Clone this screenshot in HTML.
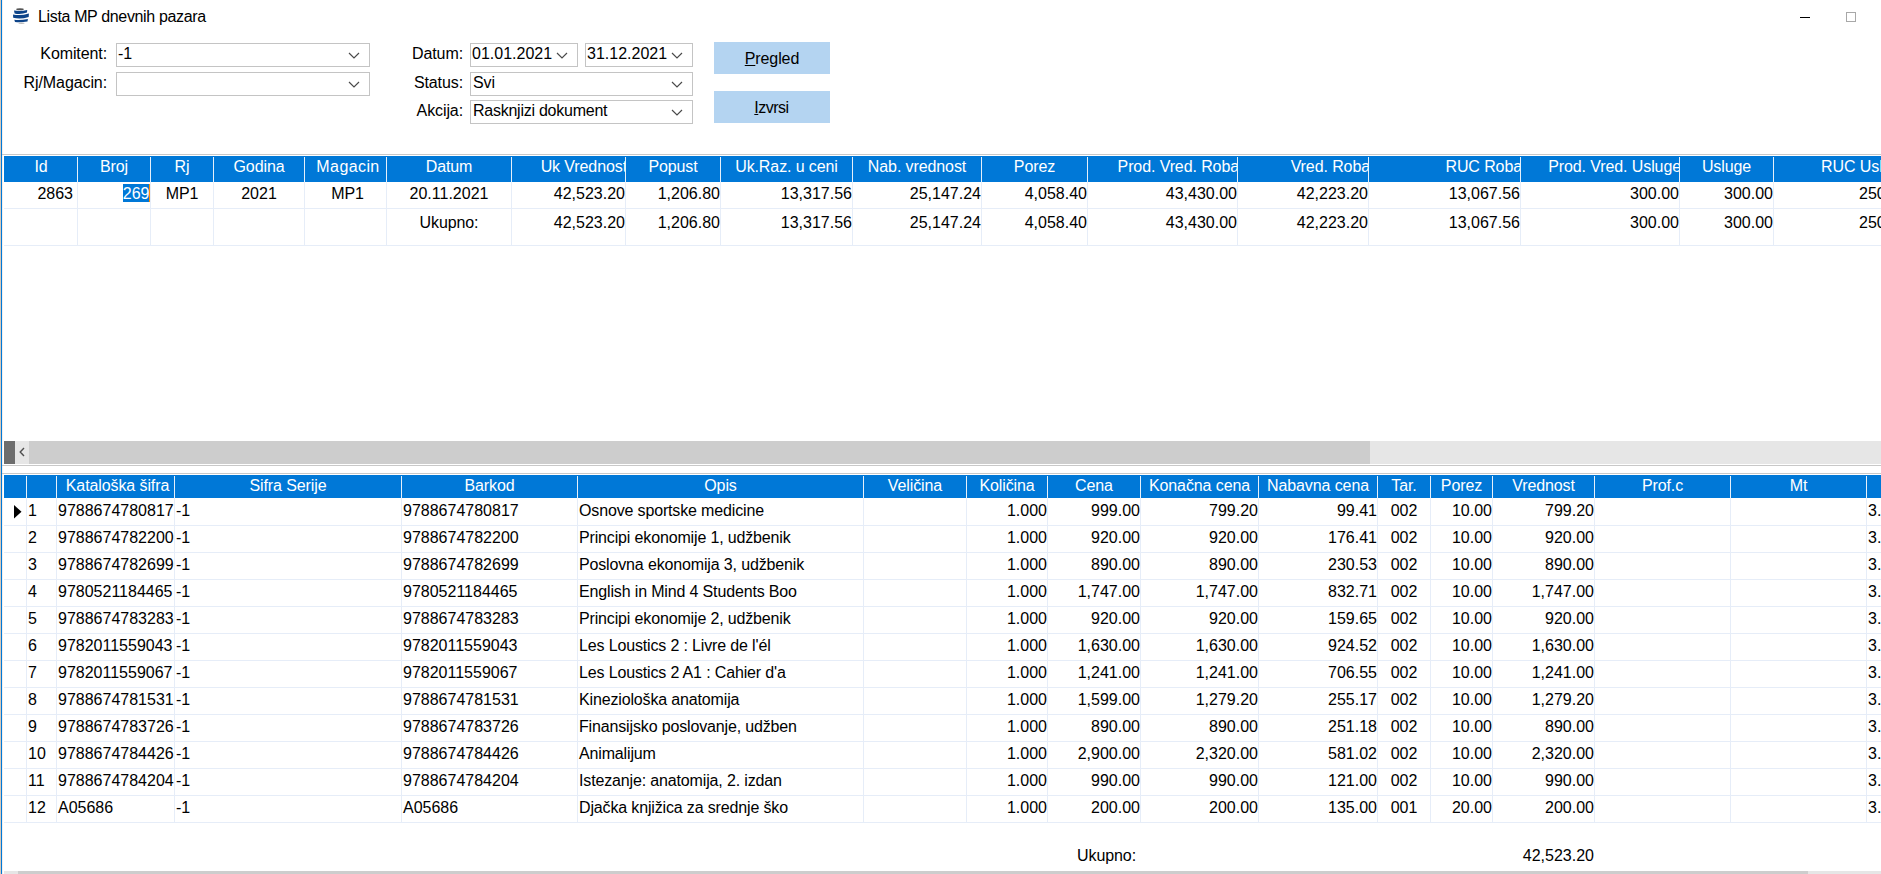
<!DOCTYPE html>
<html><head><meta charset="utf-8"><title>Lista MP dnevnih pazara</title>
<style>
html,body{margin:0;padding:0;background:#fff;width:1881px;height:874px;overflow:hidden;position:relative}
.t{position:absolute;white-space:nowrap;line-height:20px;font-family:"Liberation Sans", sans-serif}
.r{position:absolute}
.clip{position:absolute;overflow:hidden}
</style></head><body>
<div class="r" style="left:0px;top:0px;width:1px;height:874px;background:#d6c9bc;"></div>
<div class="r" style="left:1px;top:0px;width:1px;height:874px;background:#0078d7;"></div>
<div class="r" style="left:2px;top:0px;width:1px;height:874px;background:#f4eeea;"></div>
<svg class="r" style="left:10px;top:5px" width="22" height="22" viewBox="0 0 22 22">
<ellipse cx="10" cy="4.2" rx="3.8" ry="1.0" fill="#555"/>
<path d="M4 5.6 Q10.5 6.6 17.2 5.0 L17.0 7.6 Q10.5 9.8 4.6 8.4 Z" fill="#0d4489"/>
<path d="M3 9.4 Q10.5 11.2 18.9 8.4 L18.7 11.9 Q10.5 14.8 3.2 12.8 Z" fill="#0d4489"/>
<path d="M4.3 14.8 Q10.5 15.6 17.9 13.9 L17.5 16.5 Q10.5 17.8 5 17.0 Z" fill="#0d4489"/>
<ellipse cx="11.5" cy="18.2" rx="3.2" ry="0.7" fill="#bbb"/>
</svg>
<div class="t" style="left:38px;top:7.46px;font-size:16px;color:#000;letter-spacing:-0.35px;">Lista MP dnevnih pazara</div>
<div class="r" style="left:1800px;top:17px;width:10px;height:1px;background:#000;"></div>
<div class="r" style="left:1846px;top:12px;width:10px;height:10px;box-sizing:border-box;border:1px solid #a8a8a8;background:transparent"></div>
<div class="t" style="right:1774px;top:44.46px;font-size:16px;color:#000;letter-spacing:-0.1px;text-align:right;">Komitent:</div>
<div class="t" style="right:1774px;top:73.46px;font-size:16px;color:#000;letter-spacing:-0.1px;text-align:right;">Rj/Magacin:</div>
<div class="r" style="left:116px;top:43px;width:254px;height:24px;box-sizing:border-box;border:1px solid #c4c4c4;background:#fff"></div>
<div class="t" style="left:118px;top:44.46px;font-size:16px;color:#000;">-1</div>
<svg class="r" style="left:348.0px;top:52.0px" width="12" height="7"><polyline points="1,1 6.0,6 11,1" fill="none" stroke="#4a4a4a" stroke-width="1.2"/></svg>
<div class="r" style="left:116px;top:72px;width:254px;height:24px;box-sizing:border-box;border:1px solid #c4c4c4;background:#fff"></div>
<svg class="r" style="left:348.0px;top:81.0px" width="12" height="7"><polyline points="1,1 6.0,6 11,1" fill="none" stroke="#4a4a4a" stroke-width="1.2"/></svg>
<div class="t" style="right:1418px;top:44.46px;font-size:16px;color:#000;letter-spacing:-0.1px;text-align:right;">Datum:</div>
<div class="t" style="right:1418px;top:73.46px;font-size:16px;color:#000;letter-spacing:-0.1px;text-align:right;">Status:</div>
<div class="t" style="right:1418px;top:101.46px;font-size:16px;color:#000;letter-spacing:-0.1px;text-align:right;">Akcija:</div>
<div class="r" style="left:470px;top:43px;width:108px;height:24px;box-sizing:border-box;border:1px solid #c4c4c4;background:#fff"></div>
<div class="t" style="left:472px;top:44.46px;font-size:16px;color:#000;">01.01.2021</div>
<svg class="r" style="left:556.0px;top:52.0px" width="12" height="7"><polyline points="1,1 6.0,6 11,1" fill="none" stroke="#4a4a4a" stroke-width="1.2"/></svg>
<div class="r" style="left:585px;top:43px;width:108px;height:24px;box-sizing:border-box;border:1px solid #c4c4c4;background:#fff"></div>
<div class="t" style="left:587px;top:44.46px;font-size:16px;color:#000;">31.12.2021</div>
<svg class="r" style="left:671.0px;top:52.0px" width="12" height="7"><polyline points="1,1 6.0,6 11,1" fill="none" stroke="#4a4a4a" stroke-width="1.2"/></svg>
<div class="r" style="left:470px;top:72px;width:223px;height:24px;box-sizing:border-box;border:1px solid #c4c4c4;background:#fff"></div>
<div class="t" style="left:473px;top:73.46px;font-size:16px;color:#000;letter-spacing:-0.1px;">Svi</div>
<svg class="r" style="left:671.0px;top:81.0px" width="12" height="7"><polyline points="1,1 6.0,6 11,1" fill="none" stroke="#4a4a4a" stroke-width="1.2"/></svg>
<div class="r" style="left:470px;top:100px;width:223px;height:24px;box-sizing:border-box;border:1px solid #c4c4c4;background:#fff"></div>
<div class="t" style="left:473px;top:101.46px;font-size:16px;color:#000;letter-spacing:-0.25px;">Rasknjizi dokument</div>
<svg class="r" style="left:671.0px;top:109.0px" width="12" height="7"><polyline points="1,1 6.0,6 11,1" fill="none" stroke="#4a4a4a" stroke-width="1.2"/></svg>
<div class="r" style="left:714px;top:42px;width:116px;height:32px;background:#b4d4f1;"></div>
<div class="t" style="left:472px;width:600px;top:49.46px;font-size:16px;color:#000;letter-spacing:-0.1px;text-align:center;"><u>P</u>regled</div>
<div class="r" style="left:714px;top:91px;width:116px;height:32px;background:#b4d4f1;"></div>
<div class="t" style="left:471.5px;width:600px;top:98.46px;font-size:16px;color:#000;letter-spacing:-0.5px;text-align:center;"><u>I</u>zvrsi</div>
<div class="r" style="left:2px;top:154px;width:1879px;height:1px;background:#c8c8c8;"></div>
<div class="r" style="left:4px;top:156px;width:1877px;height:26px;background:#0078d7;"></div>
<div class="r" style="left:4px;top:208px;width:1877px;height:1px;background:#e6edf8;"></div>
<div class="r" style="left:4px;top:245px;width:1877px;height:1px;background:#e6edf8;"></div>
<div class="t" style="left:-259.0px;width:600px;top:157.46px;font-size:16px;color:#fff;letter-spacing:-0.1px;text-align:center;">Id</div>
<div class="t" style="left:-186.0px;width:600px;top:157.46px;font-size:16px;color:#fff;letter-spacing:-0.1px;text-align:center;">Broj</div>
<div class="t" style="left:-118.0px;width:600px;top:157.46px;font-size:16px;color:#fff;letter-spacing:-0.1px;text-align:center;">Rj</div>
<div class="t" style="left:-41.0px;width:600px;top:157.46px;font-size:16px;color:#fff;letter-spacing:-0.1px;text-align:center;">Godina</div>
<div class="t" style="left:48.0px;width:600px;top:157.46px;font-size:16px;color:#fff;letter-spacing:0.4px;text-align:center;">Magacin</div>
<div class="t" style="left:149.0px;width:600px;top:157.46px;font-size:16px;color:#fff;letter-spacing:-0.1px;text-align:center;">Datum</div>
<div class="clip" style="left:512px;top:156px;width:114px;height:26px"><div class="t" style="right:-1px;top:1.46px;font-size:16px;color:#fff;letter-spacing:-0.1px">Uk Vrednost</div></div>
<div class="t" style="left:373.0px;width:600px;top:157.46px;font-size:16px;color:#fff;letter-spacing:-0.1px;text-align:center;">Popust</div>
<div class="t" style="left:486.5px;width:600px;top:157.46px;font-size:16px;color:#fff;letter-spacing:-0.1px;text-align:center;">Uk.Raz. u ceni</div>
<div class="t" style="left:617.0px;width:600px;top:157.46px;font-size:16px;color:#fff;letter-spacing:-0.1px;text-align:center;">Nab. vrednost</div>
<div class="t" style="left:734.5px;width:600px;top:157.46px;font-size:16px;color:#fff;letter-spacing:-0.1px;text-align:center;">Porez</div>
<div class="clip" style="left:1088px;top:156px;width:150px;height:26px"><div class="t" style="right:-1px;top:1.46px;font-size:16px;color:#fff;letter-spacing:-0.1px">Prod. Vred. Roba</div></div>
<div class="clip" style="left:1238px;top:156px;width:131px;height:26px"><div class="t" style="right:-1px;top:1.46px;font-size:16px;color:#fff;letter-spacing:-0.1px">Vred. Roba</div></div>
<div class="clip" style="left:1369px;top:156px;width:152px;height:26px"><div class="t" style="right:-1px;top:1.46px;font-size:16px;color:#fff;letter-spacing:-0.1px">RUC Roba</div></div>
<div class="clip" style="left:1521px;top:156px;width:159px;height:26px"><div class="t" style="right:-1px;top:1.46px;font-size:16px;color:#fff;letter-spacing:-0.1px">Prod. Vred. Usluge</div></div>
<div class="t" style="left:1426.5px;width:600px;top:157.46px;font-size:16px;color:#fff;letter-spacing:-0.1px;text-align:center;">Usluge</div>
<div class="clip" style="left:1774px;top:156px;width:137px;height:26px"><div class="t" style="right:2px;top:1.46px;font-size:16px;color:#fff;letter-spacing:-0.1px">RUC Usluge</div></div>
<div class="t" style="right:1808px;top:184.46px;font-size:16px;color:#000;text-align:right;">2863</div>
<div class="r" style="left:123px;top:184px;width:27px;height:18px;background:#0078d7;"></div>
<div class="t" style="right:1731.5px;top:184.46px;font-size:16px;color:#fff;text-align:right;">269</div>
<div class="r" style="left:149px;top:184px;width:1px;height:18px;background:#ff8c00;"></div>
<div class="t" style="left:-118.0px;width:600px;top:184.46px;font-size:16px;color:#000;letter-spacing:-0.1px;text-align:center;">MP1</div>
<div class="t" style="left:-41.0px;width:600px;top:184.46px;font-size:16px;color:#000;text-align:center;">2021</div>
<div class="t" style="left:47.5px;width:600px;top:184.46px;font-size:16px;color:#000;letter-spacing:-0.1px;text-align:center;">MP1</div>
<div class="t" style="left:149.0px;width:600px;top:184.46px;font-size:16px;color:#000;text-align:center;">20.11.2021</div>
<div class="t" style="left:149.0px;width:600px;top:213.46px;font-size:16px;color:#000;letter-spacing:-0.1px;text-align:center;">Ukupno:</div>
<div class="t" style="right:1256px;top:184.46px;font-size:16px;color:#000;text-align:right;">42,523.20</div>
<div class="t" style="right:1256px;top:213.46px;font-size:16px;color:#000;text-align:right;">42,523.20</div>
<div class="t" style="right:1161px;top:184.46px;font-size:16px;color:#000;text-align:right;">1,206.80</div>
<div class="t" style="right:1161px;top:213.46px;font-size:16px;color:#000;text-align:right;">1,206.80</div>
<div class="t" style="right:1029px;top:184.46px;font-size:16px;color:#000;text-align:right;">13,317.56</div>
<div class="t" style="right:1029px;top:213.46px;font-size:16px;color:#000;text-align:right;">13,317.56</div>
<div class="t" style="right:900px;top:184.46px;font-size:16px;color:#000;text-align:right;">25,147.24</div>
<div class="t" style="right:900px;top:213.46px;font-size:16px;color:#000;text-align:right;">25,147.24</div>
<div class="t" style="right:794px;top:184.46px;font-size:16px;color:#000;text-align:right;">4,058.40</div>
<div class="t" style="right:794px;top:213.46px;font-size:16px;color:#000;text-align:right;">4,058.40</div>
<div class="t" style="right:644px;top:184.46px;font-size:16px;color:#000;text-align:right;">43,430.00</div>
<div class="t" style="right:644px;top:213.46px;font-size:16px;color:#000;text-align:right;">43,430.00</div>
<div class="t" style="right:513px;top:184.46px;font-size:16px;color:#000;text-align:right;">42,223.20</div>
<div class="t" style="right:513px;top:213.46px;font-size:16px;color:#000;text-align:right;">42,223.20</div>
<div class="t" style="right:361px;top:184.46px;font-size:16px;color:#000;text-align:right;">13,067.56</div>
<div class="t" style="right:361px;top:213.46px;font-size:16px;color:#000;text-align:right;">13,067.56</div>
<div class="t" style="right:202px;top:184.46px;font-size:16px;color:#000;text-align:right;">300.00</div>
<div class="t" style="right:202px;top:213.46px;font-size:16px;color:#000;text-align:right;">300.00</div>
<div class="t" style="right:108px;top:184.46px;font-size:16px;color:#000;text-align:right;">300.00</div>
<div class="t" style="right:108px;top:213.46px;font-size:16px;color:#000;text-align:right;">300.00</div>
<div class="t" style="right:-27px;top:184.46px;font-size:16px;color:#000;text-align:right;">250.00</div>
<div class="t" style="right:-27px;top:213.46px;font-size:16px;color:#000;text-align:right;">250.00</div>
<div class="r" style="left:77px;top:157px;width:1px;height:25px;background:#e6f0fa;"></div>
<div class="r" style="left:77px;top:182px;width:1px;height:63px;background:#e6edf8;"></div>
<div class="r" style="left:150px;top:157px;width:1px;height:25px;background:#e6f0fa;"></div>
<div class="r" style="left:150px;top:182px;width:1px;height:63px;background:#e6edf8;"></div>
<div class="r" style="left:213px;top:157px;width:1px;height:25px;background:#e6f0fa;"></div>
<div class="r" style="left:213px;top:182px;width:1px;height:63px;background:#e6edf8;"></div>
<div class="r" style="left:304px;top:157px;width:1px;height:25px;background:#e6f0fa;"></div>
<div class="r" style="left:304px;top:182px;width:1px;height:63px;background:#e6edf8;"></div>
<div class="r" style="left:386px;top:157px;width:1px;height:25px;background:#e6f0fa;"></div>
<div class="r" style="left:386px;top:182px;width:1px;height:63px;background:#e6edf8;"></div>
<div class="r" style="left:511px;top:157px;width:1px;height:25px;background:#e6f0fa;"></div>
<div class="r" style="left:511px;top:182px;width:1px;height:63px;background:#e6edf8;"></div>
<div class="r" style="left:625px;top:157px;width:1px;height:25px;background:#e6f0fa;"></div>
<div class="r" style="left:625px;top:182px;width:1px;height:63px;background:#e6edf8;"></div>
<div class="r" style="left:720px;top:157px;width:1px;height:25px;background:#e6f0fa;"></div>
<div class="r" style="left:720px;top:182px;width:1px;height:63px;background:#e6edf8;"></div>
<div class="r" style="left:852px;top:157px;width:1px;height:25px;background:#e6f0fa;"></div>
<div class="r" style="left:852px;top:182px;width:1px;height:63px;background:#e6edf8;"></div>
<div class="r" style="left:981px;top:157px;width:1px;height:25px;background:#e6f0fa;"></div>
<div class="r" style="left:981px;top:182px;width:1px;height:63px;background:#e6edf8;"></div>
<div class="r" style="left:1087px;top:157px;width:1px;height:25px;background:#e6f0fa;"></div>
<div class="r" style="left:1087px;top:182px;width:1px;height:63px;background:#e6edf8;"></div>
<div class="r" style="left:1237px;top:157px;width:1px;height:25px;background:#e6f0fa;"></div>
<div class="r" style="left:1237px;top:182px;width:1px;height:63px;background:#e6edf8;"></div>
<div class="r" style="left:1368px;top:157px;width:1px;height:25px;background:#e6f0fa;"></div>
<div class="r" style="left:1368px;top:182px;width:1px;height:63px;background:#e6edf8;"></div>
<div class="r" style="left:1520px;top:157px;width:1px;height:25px;background:#e6f0fa;"></div>
<div class="r" style="left:1520px;top:182px;width:1px;height:63px;background:#e6edf8;"></div>
<div class="r" style="left:1679px;top:157px;width:1px;height:25px;background:#e6f0fa;"></div>
<div class="r" style="left:1679px;top:182px;width:1px;height:63px;background:#e6edf8;"></div>
<div class="r" style="left:1773px;top:157px;width:1px;height:25px;background:#e6f0fa;"></div>
<div class="r" style="left:1773px;top:182px;width:1px;height:63px;background:#e6edf8;"></div>
<div class="r" style="left:4px;top:441px;width:1877px;height:23px;background:#e6e6e6;"></div>
<div class="r" style="left:4px;top:441px;width:11px;height:23px;background:#6d6d6d;"></div>
<div class="r" style="left:29px;top:441px;width:1341px;height:23px;background:#cdcdcd;"></div>
<svg class="r" style="left:18px;top:446px" width="9" height="13"><polyline points="6,2 2.2,6 6,10" fill="none" stroke="#505050" stroke-width="1.4"/></svg>
<div class="r" style="left:2px;top:465px;width:1879px;height:1px;background:#c8c8c8;"></div>
<div class="r" style="left:2px;top:473px;width:1879px;height:1px;background:#c8c8c8;"></div>
<div class="r" style="left:4px;top:475px;width:1877px;height:23px;background:#0078d7;"></div>
<div class="r" style="left:26px;top:476px;width:1px;height:22px;background:#e6f0fa;"></div>
<div class="r" style="left:26px;top:498px;width:1px;height:324px;background:#e6edf8;"></div>
<div class="r" style="left:56px;top:476px;width:1px;height:22px;background:#e6f0fa;"></div>
<div class="r" style="left:56px;top:498px;width:1px;height:324px;background:#e6edf8;"></div>
<div class="r" style="left:174px;top:476px;width:1px;height:22px;background:#e6f0fa;"></div>
<div class="r" style="left:174px;top:498px;width:1px;height:324px;background:#e6edf8;"></div>
<div class="r" style="left:401px;top:476px;width:1px;height:22px;background:#e6f0fa;"></div>
<div class="r" style="left:401px;top:498px;width:1px;height:324px;background:#e6edf8;"></div>
<div class="r" style="left:577px;top:476px;width:1px;height:22px;background:#e6f0fa;"></div>
<div class="r" style="left:577px;top:498px;width:1px;height:324px;background:#e6edf8;"></div>
<div class="r" style="left:863px;top:476px;width:1px;height:22px;background:#e6f0fa;"></div>
<div class="r" style="left:863px;top:498px;width:1px;height:324px;background:#e6edf8;"></div>
<div class="r" style="left:966px;top:476px;width:1px;height:22px;background:#e6f0fa;"></div>
<div class="r" style="left:966px;top:498px;width:1px;height:324px;background:#e6edf8;"></div>
<div class="r" style="left:1047px;top:476px;width:1px;height:22px;background:#e6f0fa;"></div>
<div class="r" style="left:1047px;top:498px;width:1px;height:324px;background:#e6edf8;"></div>
<div class="r" style="left:1140px;top:476px;width:1px;height:22px;background:#e6f0fa;"></div>
<div class="r" style="left:1140px;top:498px;width:1px;height:324px;background:#e6edf8;"></div>
<div class="r" style="left:1258px;top:476px;width:1px;height:22px;background:#e6f0fa;"></div>
<div class="r" style="left:1258px;top:498px;width:1px;height:324px;background:#e6edf8;"></div>
<div class="r" style="left:1377px;top:476px;width:1px;height:22px;background:#e6f0fa;"></div>
<div class="r" style="left:1377px;top:498px;width:1px;height:324px;background:#e6edf8;"></div>
<div class="r" style="left:1430px;top:476px;width:1px;height:22px;background:#e6f0fa;"></div>
<div class="r" style="left:1430px;top:498px;width:1px;height:324px;background:#e6edf8;"></div>
<div class="r" style="left:1492px;top:476px;width:1px;height:22px;background:#e6f0fa;"></div>
<div class="r" style="left:1492px;top:498px;width:1px;height:324px;background:#e6edf8;"></div>
<div class="r" style="left:1594px;top:476px;width:1px;height:22px;background:#e6f0fa;"></div>
<div class="r" style="left:1594px;top:498px;width:1px;height:324px;background:#e6edf8;"></div>
<div class="r" style="left:1730px;top:476px;width:1px;height:22px;background:#e6f0fa;"></div>
<div class="r" style="left:1730px;top:498px;width:1px;height:324px;background:#e6edf8;"></div>
<div class="r" style="left:1866px;top:476px;width:1px;height:22px;background:#e6f0fa;"></div>
<div class="r" style="left:1866px;top:498px;width:1px;height:324px;background:#e6edf8;"></div>
<div class="r" style="left:4px;top:525px;width:1877px;height:1px;background:#e6edf8;"></div>
<div class="r" style="left:4px;top:552px;width:1877px;height:1px;background:#e6edf8;"></div>
<div class="r" style="left:4px;top:579px;width:1877px;height:1px;background:#e6edf8;"></div>
<div class="r" style="left:4px;top:606px;width:1877px;height:1px;background:#e6edf8;"></div>
<div class="r" style="left:4px;top:633px;width:1877px;height:1px;background:#e6edf8;"></div>
<div class="r" style="left:4px;top:660px;width:1877px;height:1px;background:#e6edf8;"></div>
<div class="r" style="left:4px;top:687px;width:1877px;height:1px;background:#e6edf8;"></div>
<div class="r" style="left:4px;top:714px;width:1877px;height:1px;background:#e6edf8;"></div>
<div class="r" style="left:4px;top:741px;width:1877px;height:1px;background:#e6edf8;"></div>
<div class="r" style="left:4px;top:768px;width:1877px;height:1px;background:#e6edf8;"></div>
<div class="r" style="left:4px;top:795px;width:1877px;height:1px;background:#e6edf8;"></div>
<div class="r" style="left:4px;top:822px;width:1877px;height:1px;background:#e6edf8;"></div>
<div class="t" style="left:-182.5px;width:600px;top:476.46px;font-size:16px;color:#fff;letter-spacing:-0.1px;text-align:center;">Kataloška šifra</div>
<div class="t" style="left:-12.0px;width:600px;top:476.46px;font-size:16px;color:#fff;letter-spacing:-0.1px;text-align:center;">Sifra Serije</div>
<div class="t" style="left:189.5px;width:600px;top:476.46px;font-size:16px;color:#fff;letter-spacing:-0.1px;text-align:center;">Barkod</div>
<div class="t" style="left:420.5px;width:600px;top:476.46px;font-size:16px;color:#fff;letter-spacing:-0.1px;text-align:center;">Opis</div>
<div class="t" style="left:615.0px;width:600px;top:476.46px;font-size:16px;color:#fff;letter-spacing:-0.1px;text-align:center;">Veličina</div>
<div class="t" style="left:707.0px;width:600px;top:476.46px;font-size:16px;color:#fff;letter-spacing:-0.1px;text-align:center;">Količina</div>
<div class="t" style="left:794.0px;width:600px;top:476.46px;font-size:16px;color:#fff;letter-spacing:-0.1px;text-align:center;">Cena</div>
<div class="t" style="left:899.5px;width:600px;top:476.46px;font-size:16px;color:#fff;letter-spacing:-0.1px;text-align:center;">Konačna cena</div>
<div class="t" style="left:1018.0px;width:600px;top:476.46px;font-size:16px;color:#fff;letter-spacing:-0.1px;text-align:center;">Nabavna cena</div>
<div class="t" style="left:1104.0px;width:600px;top:476.46px;font-size:16px;color:#fff;letter-spacing:-0.1px;text-align:center;">Tar.</div>
<div class="t" style="left:1161.5px;width:600px;top:476.46px;font-size:16px;color:#fff;letter-spacing:-0.1px;text-align:center;">Porez</div>
<div class="t" style="left:1243.5px;width:600px;top:476.46px;font-size:16px;color:#fff;letter-spacing:-0.1px;text-align:center;">Vrednost</div>
<div class="t" style="left:1362.5px;width:600px;top:476.46px;font-size:16px;color:#fff;letter-spacing:-0.1px;text-align:center;">Prof.c</div>
<div class="t" style="left:1498.5px;width:600px;top:476.46px;font-size:16px;color:#fff;letter-spacing:-0.1px;text-align:center;">Mt</div>
<div class="t" style="left:28px;top:501.46px;font-size:16px;color:#000;">1</div>
<div class="t" style="left:58px;top:501.46px;font-size:16px;color:#000;">9788674780817</div>
<div class="t" style="left:176px;top:501.46px;font-size:16px;color:#000;">-1</div>
<div class="t" style="left:403px;top:501.46px;font-size:16px;color:#000;">9788674780817</div>
<div class="t" style="left:579px;top:501.46px;font-size:16px;color:#000;letter-spacing:-0.15px;">Osnove sportske medicine</div>
<div class="t" style="right:834px;top:501.46px;font-size:16px;color:#000;text-align:right;">1.000</div>
<div class="t" style="right:741px;top:501.46px;font-size:16px;color:#000;text-align:right;">999.00</div>
<div class="t" style="right:623px;top:501.46px;font-size:16px;color:#000;text-align:right;">799.20</div>
<div class="t" style="right:504px;top:501.46px;font-size:16px;color:#000;text-align:right;">99.41</div>
<div class="t" style="left:1104.0px;width:600px;top:501.46px;font-size:16px;color:#000;text-align:center;">002</div>
<div class="t" style="right:389px;top:501.46px;font-size:16px;color:#000;text-align:right;">10.00</div>
<div class="t" style="right:287px;top:501.46px;font-size:16px;color:#000;text-align:right;">799.20</div>
<div class="t" style="left:1868px;top:501.46px;font-size:16px;color:#000;">3.50</div>
<div class="t" style="left:28px;top:528.46px;font-size:16px;color:#000;">2</div>
<div class="t" style="left:58px;top:528.46px;font-size:16px;color:#000;">9788674782200</div>
<div class="t" style="left:176px;top:528.46px;font-size:16px;color:#000;">-1</div>
<div class="t" style="left:403px;top:528.46px;font-size:16px;color:#000;">9788674782200</div>
<div class="t" style="left:579px;top:528.46px;font-size:16px;color:#000;letter-spacing:-0.15px;">Principi ekonomije 1, udžbenik</div>
<div class="t" style="right:834px;top:528.46px;font-size:16px;color:#000;text-align:right;">1.000</div>
<div class="t" style="right:741px;top:528.46px;font-size:16px;color:#000;text-align:right;">920.00</div>
<div class="t" style="right:623px;top:528.46px;font-size:16px;color:#000;text-align:right;">920.00</div>
<div class="t" style="right:504px;top:528.46px;font-size:16px;color:#000;text-align:right;">176.41</div>
<div class="t" style="left:1104.0px;width:600px;top:528.46px;font-size:16px;color:#000;text-align:center;">002</div>
<div class="t" style="right:389px;top:528.46px;font-size:16px;color:#000;text-align:right;">10.00</div>
<div class="t" style="right:287px;top:528.46px;font-size:16px;color:#000;text-align:right;">920.00</div>
<div class="t" style="left:1868px;top:528.46px;font-size:16px;color:#000;">3.50</div>
<div class="t" style="left:28px;top:555.46px;font-size:16px;color:#000;">3</div>
<div class="t" style="left:58px;top:555.46px;font-size:16px;color:#000;">9788674782699</div>
<div class="t" style="left:176px;top:555.46px;font-size:16px;color:#000;">-1</div>
<div class="t" style="left:403px;top:555.46px;font-size:16px;color:#000;">9788674782699</div>
<div class="t" style="left:579px;top:555.46px;font-size:16px;color:#000;letter-spacing:-0.15px;">Poslovna ekonomija 3, udžbenik</div>
<div class="t" style="right:834px;top:555.46px;font-size:16px;color:#000;text-align:right;">1.000</div>
<div class="t" style="right:741px;top:555.46px;font-size:16px;color:#000;text-align:right;">890.00</div>
<div class="t" style="right:623px;top:555.46px;font-size:16px;color:#000;text-align:right;">890.00</div>
<div class="t" style="right:504px;top:555.46px;font-size:16px;color:#000;text-align:right;">230.53</div>
<div class="t" style="left:1104.0px;width:600px;top:555.46px;font-size:16px;color:#000;text-align:center;">002</div>
<div class="t" style="right:389px;top:555.46px;font-size:16px;color:#000;text-align:right;">10.00</div>
<div class="t" style="right:287px;top:555.46px;font-size:16px;color:#000;text-align:right;">890.00</div>
<div class="t" style="left:1868px;top:555.46px;font-size:16px;color:#000;">3.50</div>
<div class="t" style="left:28px;top:582.46px;font-size:16px;color:#000;">4</div>
<div class="t" style="left:58px;top:582.46px;font-size:16px;color:#000;">9780521184465</div>
<div class="t" style="left:176px;top:582.46px;font-size:16px;color:#000;">-1</div>
<div class="t" style="left:403px;top:582.46px;font-size:16px;color:#000;">9780521184465</div>
<div class="t" style="left:579px;top:582.46px;font-size:16px;color:#000;letter-spacing:-0.15px;">English in Mind 4 Students Boo</div>
<div class="t" style="right:834px;top:582.46px;font-size:16px;color:#000;text-align:right;">1.000</div>
<div class="t" style="right:741px;top:582.46px;font-size:16px;color:#000;text-align:right;">1,747.00</div>
<div class="t" style="right:623px;top:582.46px;font-size:16px;color:#000;text-align:right;">1,747.00</div>
<div class="t" style="right:504px;top:582.46px;font-size:16px;color:#000;text-align:right;">832.71</div>
<div class="t" style="left:1104.0px;width:600px;top:582.46px;font-size:16px;color:#000;text-align:center;">002</div>
<div class="t" style="right:389px;top:582.46px;font-size:16px;color:#000;text-align:right;">10.00</div>
<div class="t" style="right:287px;top:582.46px;font-size:16px;color:#000;text-align:right;">1,747.00</div>
<div class="t" style="left:1868px;top:582.46px;font-size:16px;color:#000;">3.50</div>
<div class="t" style="left:28px;top:609.46px;font-size:16px;color:#000;">5</div>
<div class="t" style="left:58px;top:609.46px;font-size:16px;color:#000;">9788674783283</div>
<div class="t" style="left:176px;top:609.46px;font-size:16px;color:#000;">-1</div>
<div class="t" style="left:403px;top:609.46px;font-size:16px;color:#000;">9788674783283</div>
<div class="t" style="left:579px;top:609.46px;font-size:16px;color:#000;letter-spacing:-0.15px;">Principi ekonomije 2, udžbenik</div>
<div class="t" style="right:834px;top:609.46px;font-size:16px;color:#000;text-align:right;">1.000</div>
<div class="t" style="right:741px;top:609.46px;font-size:16px;color:#000;text-align:right;">920.00</div>
<div class="t" style="right:623px;top:609.46px;font-size:16px;color:#000;text-align:right;">920.00</div>
<div class="t" style="right:504px;top:609.46px;font-size:16px;color:#000;text-align:right;">159.65</div>
<div class="t" style="left:1104.0px;width:600px;top:609.46px;font-size:16px;color:#000;text-align:center;">002</div>
<div class="t" style="right:389px;top:609.46px;font-size:16px;color:#000;text-align:right;">10.00</div>
<div class="t" style="right:287px;top:609.46px;font-size:16px;color:#000;text-align:right;">920.00</div>
<div class="t" style="left:1868px;top:609.46px;font-size:16px;color:#000;">3.50</div>
<div class="t" style="left:28px;top:636.46px;font-size:16px;color:#000;">6</div>
<div class="t" style="left:58px;top:636.46px;font-size:16px;color:#000;">9782011559043</div>
<div class="t" style="left:176px;top:636.46px;font-size:16px;color:#000;">-1</div>
<div class="t" style="left:403px;top:636.46px;font-size:16px;color:#000;">9782011559043</div>
<div class="t" style="left:579px;top:636.46px;font-size:16px;color:#000;letter-spacing:-0.15px;">Les Loustics 2 : Livre de l'él</div>
<div class="t" style="right:834px;top:636.46px;font-size:16px;color:#000;text-align:right;">1.000</div>
<div class="t" style="right:741px;top:636.46px;font-size:16px;color:#000;text-align:right;">1,630.00</div>
<div class="t" style="right:623px;top:636.46px;font-size:16px;color:#000;text-align:right;">1,630.00</div>
<div class="t" style="right:504px;top:636.46px;font-size:16px;color:#000;text-align:right;">924.52</div>
<div class="t" style="left:1104.0px;width:600px;top:636.46px;font-size:16px;color:#000;text-align:center;">002</div>
<div class="t" style="right:389px;top:636.46px;font-size:16px;color:#000;text-align:right;">10.00</div>
<div class="t" style="right:287px;top:636.46px;font-size:16px;color:#000;text-align:right;">1,630.00</div>
<div class="t" style="left:1868px;top:636.46px;font-size:16px;color:#000;">3.50</div>
<div class="t" style="left:28px;top:663.46px;font-size:16px;color:#000;">7</div>
<div class="t" style="left:58px;top:663.46px;font-size:16px;color:#000;">9782011559067</div>
<div class="t" style="left:176px;top:663.46px;font-size:16px;color:#000;">-1</div>
<div class="t" style="left:403px;top:663.46px;font-size:16px;color:#000;">9782011559067</div>
<div class="t" style="left:579px;top:663.46px;font-size:16px;color:#000;letter-spacing:-0.15px;">Les Loustics 2 A1 : Cahier d'a</div>
<div class="t" style="right:834px;top:663.46px;font-size:16px;color:#000;text-align:right;">1.000</div>
<div class="t" style="right:741px;top:663.46px;font-size:16px;color:#000;text-align:right;">1,241.00</div>
<div class="t" style="right:623px;top:663.46px;font-size:16px;color:#000;text-align:right;">1,241.00</div>
<div class="t" style="right:504px;top:663.46px;font-size:16px;color:#000;text-align:right;">706.55</div>
<div class="t" style="left:1104.0px;width:600px;top:663.46px;font-size:16px;color:#000;text-align:center;">002</div>
<div class="t" style="right:389px;top:663.46px;font-size:16px;color:#000;text-align:right;">10.00</div>
<div class="t" style="right:287px;top:663.46px;font-size:16px;color:#000;text-align:right;">1,241.00</div>
<div class="t" style="left:1868px;top:663.46px;font-size:16px;color:#000;">3.50</div>
<div class="t" style="left:28px;top:690.46px;font-size:16px;color:#000;">8</div>
<div class="t" style="left:58px;top:690.46px;font-size:16px;color:#000;">9788674781531</div>
<div class="t" style="left:176px;top:690.46px;font-size:16px;color:#000;">-1</div>
<div class="t" style="left:403px;top:690.46px;font-size:16px;color:#000;">9788674781531</div>
<div class="t" style="left:579px;top:690.46px;font-size:16px;color:#000;letter-spacing:-0.15px;">Kineziološka anatomija</div>
<div class="t" style="right:834px;top:690.46px;font-size:16px;color:#000;text-align:right;">1.000</div>
<div class="t" style="right:741px;top:690.46px;font-size:16px;color:#000;text-align:right;">1,599.00</div>
<div class="t" style="right:623px;top:690.46px;font-size:16px;color:#000;text-align:right;">1,279.20</div>
<div class="t" style="right:504px;top:690.46px;font-size:16px;color:#000;text-align:right;">255.17</div>
<div class="t" style="left:1104.0px;width:600px;top:690.46px;font-size:16px;color:#000;text-align:center;">002</div>
<div class="t" style="right:389px;top:690.46px;font-size:16px;color:#000;text-align:right;">10.00</div>
<div class="t" style="right:287px;top:690.46px;font-size:16px;color:#000;text-align:right;">1,279.20</div>
<div class="t" style="left:1868px;top:690.46px;font-size:16px;color:#000;">3.50</div>
<div class="t" style="left:28px;top:717.46px;font-size:16px;color:#000;">9</div>
<div class="t" style="left:58px;top:717.46px;font-size:16px;color:#000;">9788674783726</div>
<div class="t" style="left:176px;top:717.46px;font-size:16px;color:#000;">-1</div>
<div class="t" style="left:403px;top:717.46px;font-size:16px;color:#000;">9788674783726</div>
<div class="t" style="left:579px;top:717.46px;font-size:16px;color:#000;letter-spacing:-0.15px;">Finansijsko poslovanje, udžben</div>
<div class="t" style="right:834px;top:717.46px;font-size:16px;color:#000;text-align:right;">1.000</div>
<div class="t" style="right:741px;top:717.46px;font-size:16px;color:#000;text-align:right;">890.00</div>
<div class="t" style="right:623px;top:717.46px;font-size:16px;color:#000;text-align:right;">890.00</div>
<div class="t" style="right:504px;top:717.46px;font-size:16px;color:#000;text-align:right;">251.18</div>
<div class="t" style="left:1104.0px;width:600px;top:717.46px;font-size:16px;color:#000;text-align:center;">002</div>
<div class="t" style="right:389px;top:717.46px;font-size:16px;color:#000;text-align:right;">10.00</div>
<div class="t" style="right:287px;top:717.46px;font-size:16px;color:#000;text-align:right;">890.00</div>
<div class="t" style="left:1868px;top:717.46px;font-size:16px;color:#000;">3.50</div>
<div class="t" style="left:28px;top:744.46px;font-size:16px;color:#000;">10</div>
<div class="t" style="left:58px;top:744.46px;font-size:16px;color:#000;">9788674784426</div>
<div class="t" style="left:176px;top:744.46px;font-size:16px;color:#000;">-1</div>
<div class="t" style="left:403px;top:744.46px;font-size:16px;color:#000;">9788674784426</div>
<div class="t" style="left:579px;top:744.46px;font-size:16px;color:#000;letter-spacing:-0.15px;">Animalijum</div>
<div class="t" style="right:834px;top:744.46px;font-size:16px;color:#000;text-align:right;">1.000</div>
<div class="t" style="right:741px;top:744.46px;font-size:16px;color:#000;text-align:right;">2,900.00</div>
<div class="t" style="right:623px;top:744.46px;font-size:16px;color:#000;text-align:right;">2,320.00</div>
<div class="t" style="right:504px;top:744.46px;font-size:16px;color:#000;text-align:right;">581.02</div>
<div class="t" style="left:1104.0px;width:600px;top:744.46px;font-size:16px;color:#000;text-align:center;">002</div>
<div class="t" style="right:389px;top:744.46px;font-size:16px;color:#000;text-align:right;">10.00</div>
<div class="t" style="right:287px;top:744.46px;font-size:16px;color:#000;text-align:right;">2,320.00</div>
<div class="t" style="left:1868px;top:744.46px;font-size:16px;color:#000;">3.50</div>
<div class="t" style="left:28px;top:771.46px;font-size:16px;color:#000;">11</div>
<div class="t" style="left:58px;top:771.46px;font-size:16px;color:#000;">9788674784204</div>
<div class="t" style="left:176px;top:771.46px;font-size:16px;color:#000;">-1</div>
<div class="t" style="left:403px;top:771.46px;font-size:16px;color:#000;">9788674784204</div>
<div class="t" style="left:579px;top:771.46px;font-size:16px;color:#000;letter-spacing:-0.15px;">Istezanje: anatomija, 2. izdan</div>
<div class="t" style="right:834px;top:771.46px;font-size:16px;color:#000;text-align:right;">1.000</div>
<div class="t" style="right:741px;top:771.46px;font-size:16px;color:#000;text-align:right;">990.00</div>
<div class="t" style="right:623px;top:771.46px;font-size:16px;color:#000;text-align:right;">990.00</div>
<div class="t" style="right:504px;top:771.46px;font-size:16px;color:#000;text-align:right;">121.00</div>
<div class="t" style="left:1104.0px;width:600px;top:771.46px;font-size:16px;color:#000;text-align:center;">002</div>
<div class="t" style="right:389px;top:771.46px;font-size:16px;color:#000;text-align:right;">10.00</div>
<div class="t" style="right:287px;top:771.46px;font-size:16px;color:#000;text-align:right;">990.00</div>
<div class="t" style="left:1868px;top:771.46px;font-size:16px;color:#000;">3.50</div>
<div class="t" style="left:28px;top:798.46px;font-size:16px;color:#000;">12</div>
<div class="t" style="left:58px;top:798.46px;font-size:16px;color:#000;">A05686</div>
<div class="t" style="left:176px;top:798.46px;font-size:16px;color:#000;">-1</div>
<div class="t" style="left:403px;top:798.46px;font-size:16px;color:#000;">A05686</div>
<div class="t" style="left:579px;top:798.46px;font-size:16px;color:#000;letter-spacing:-0.15px;">Djačka knjižica za srednje ško</div>
<div class="t" style="right:834px;top:798.46px;font-size:16px;color:#000;text-align:right;">1.000</div>
<div class="t" style="right:741px;top:798.46px;font-size:16px;color:#000;text-align:right;">200.00</div>
<div class="t" style="right:623px;top:798.46px;font-size:16px;color:#000;text-align:right;">200.00</div>
<div class="t" style="right:504px;top:798.46px;font-size:16px;color:#000;text-align:right;">135.00</div>
<div class="t" style="left:1104.0px;width:600px;top:798.46px;font-size:16px;color:#000;text-align:center;">001</div>
<div class="t" style="right:389px;top:798.46px;font-size:16px;color:#000;text-align:right;">20.00</div>
<div class="t" style="right:287px;top:798.46px;font-size:16px;color:#000;text-align:right;">200.00</div>
<div class="t" style="left:1868px;top:798.46px;font-size:16px;color:#000;">3.50</div>
<svg class="r" style="left:14px;top:505px" width="8" height="14"><polygon points="0,0 7.5,6.8 0,13.6" fill="#000"/></svg>
<div class="t" style="right:745px;top:846.46px;font-size:16px;color:#000;letter-spacing:-0.1px;text-align:right;">Ukupno:</div>
<div class="t" style="right:287px;top:846.46px;font-size:16px;color:#000;text-align:right;">42,523.20</div>
<div class="r" style="left:4px;top:871px;width:1877px;height:3px;background:#e6e6e6;"></div>
<div class="r" style="left:18px;top:871px;width:1790px;height:3px;background:#cdcdcd;"></div>
</body></html>
